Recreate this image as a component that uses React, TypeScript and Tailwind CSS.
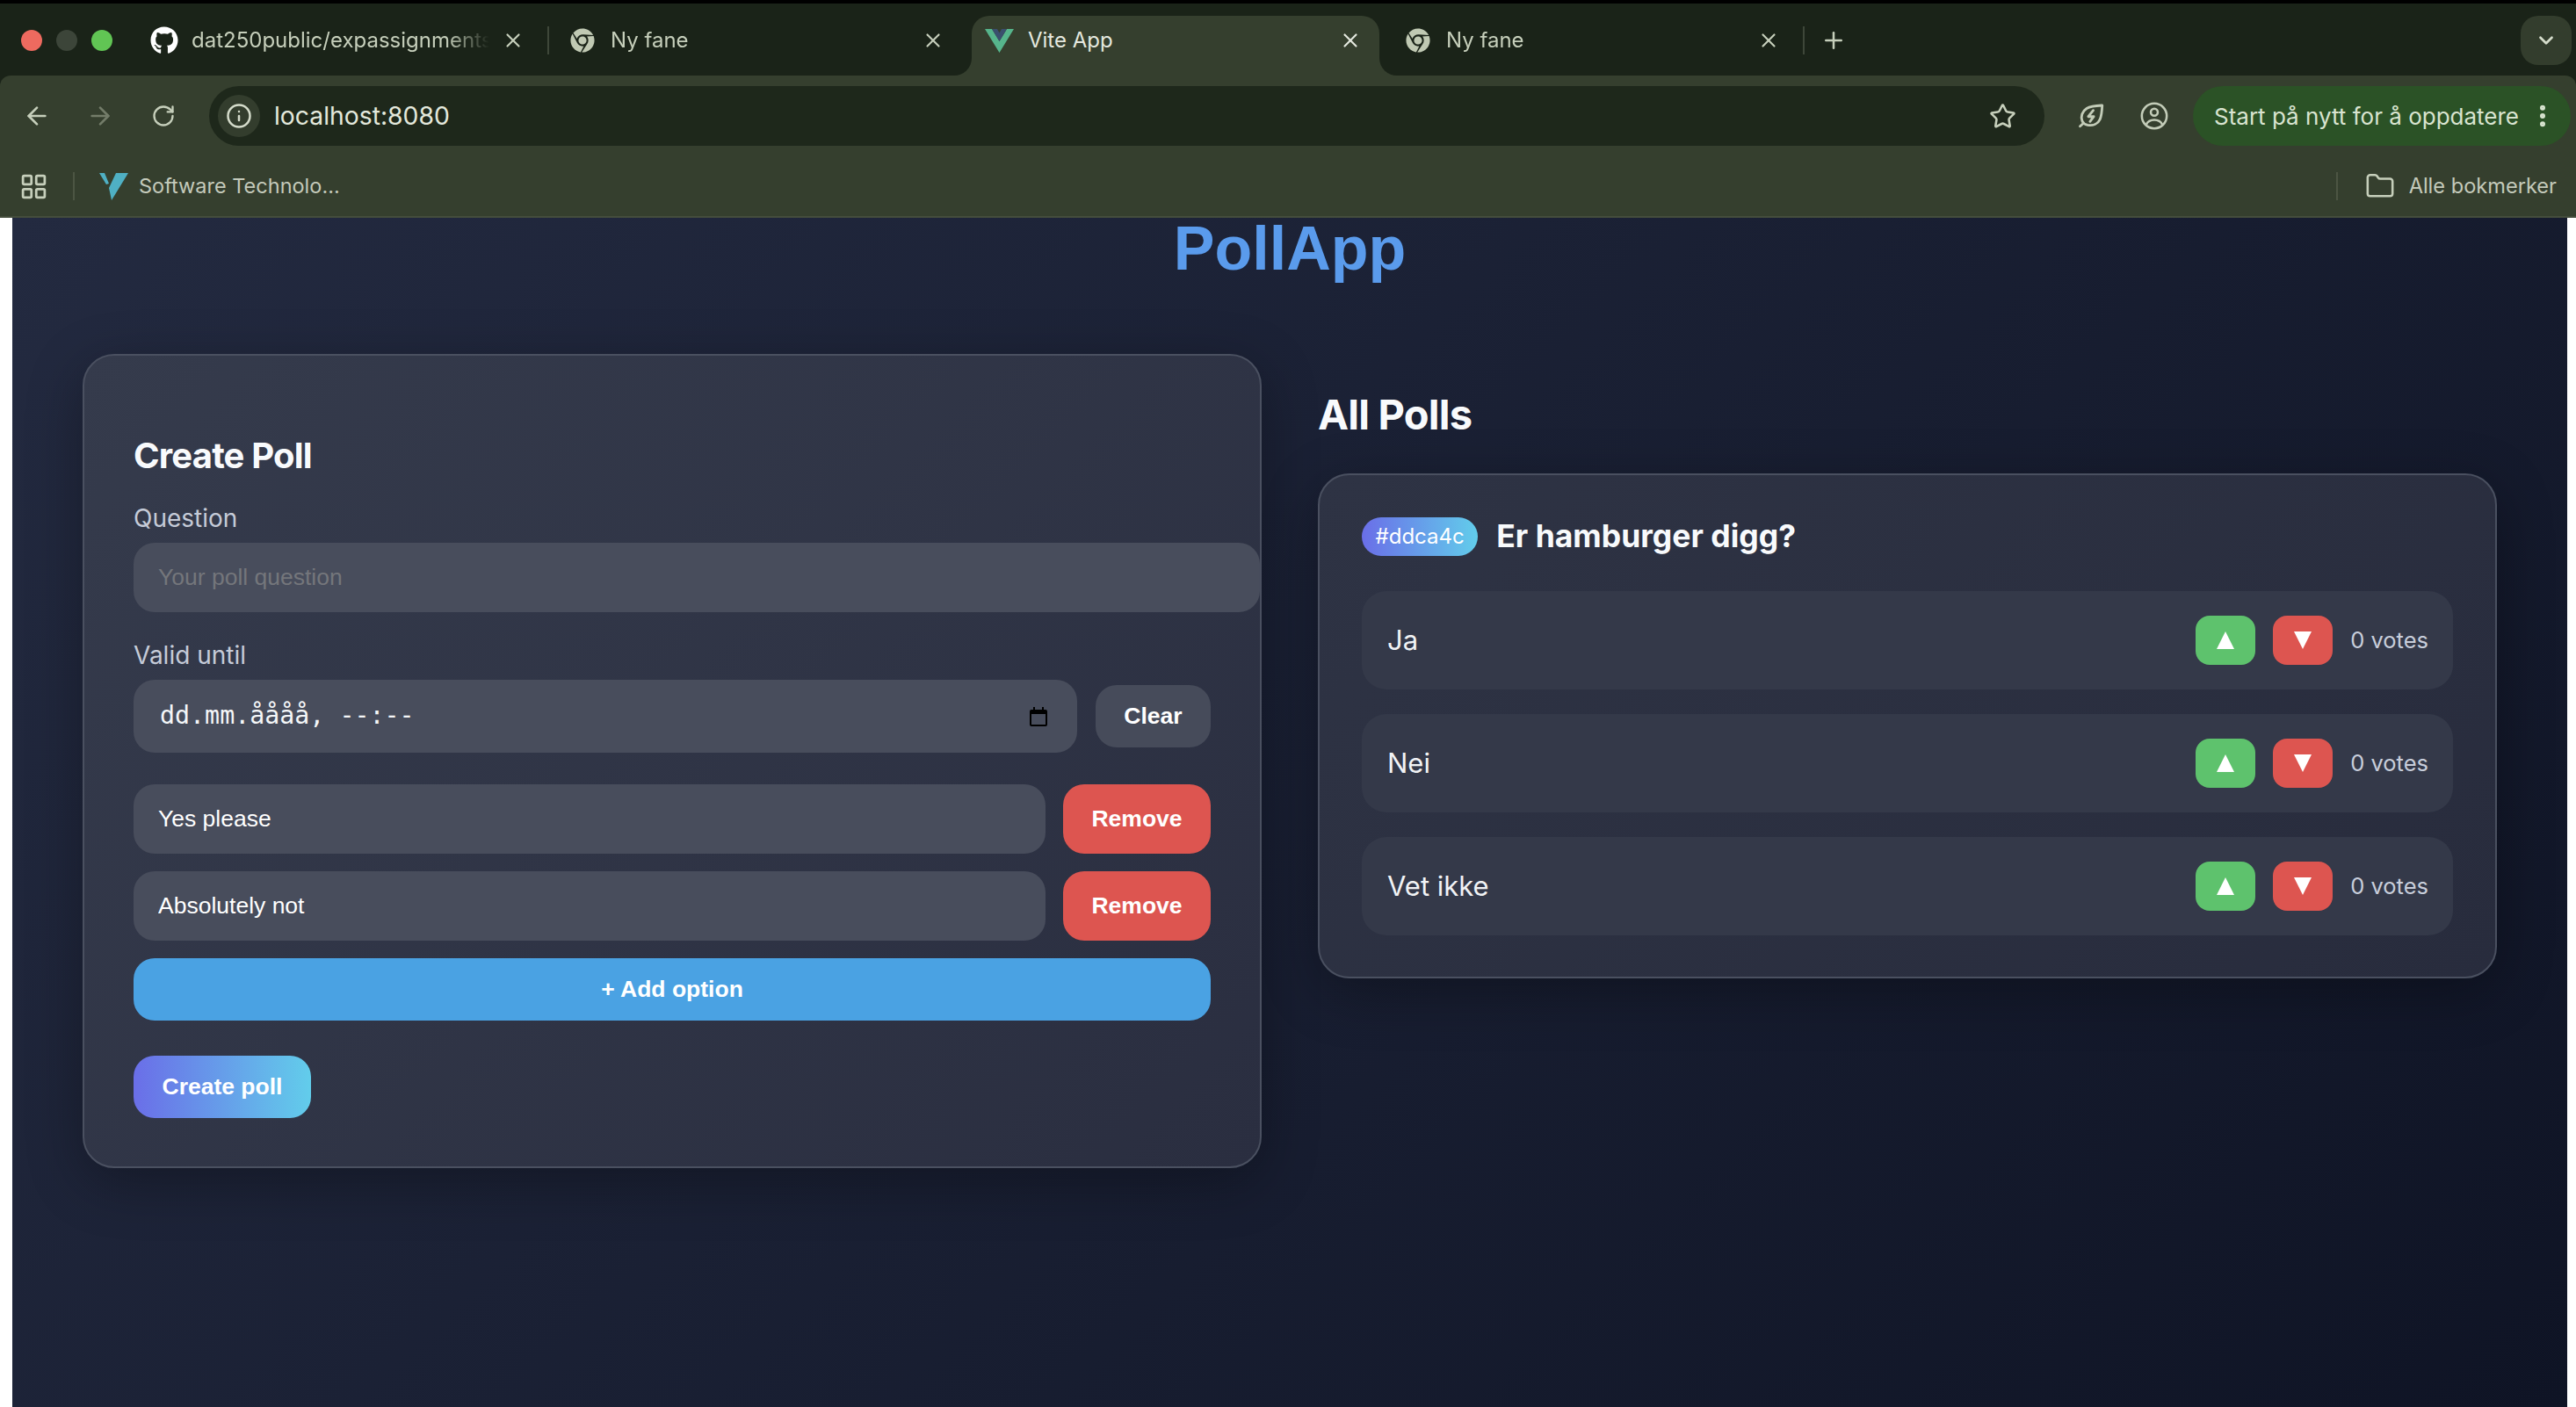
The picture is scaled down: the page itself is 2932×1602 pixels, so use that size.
import { ArrowLeft, ArrowRight, ChevronDown, EllipsisVertical, Folder, Info, LayoutGrid, Plus, RotateCw, Star, X } from 'lucide-react';
import type { ReactNode } from 'react';
import { FaChrome, FaGithub } from 'react-icons/fa';

const pollOptions = ['Ja', 'Nei', 'Vet ikke'];
const draftOptions = ['Yes please', 'Absolutely not'];

function VueIcon() {
  return (
    <svg viewBox="0 0 33 27" className="w-[33px] h-[27px] shrink-0">
      <polygon points="0,0 8,0 16.5,14 25,0 33,0 16.5,27" fill="#56b58c" />
      <polygon points="8,0 14,0 16.5,4.5 19,0 25,0 16.5,14" fill="#3a4f6e" />
    </svg>
  );
}

function BookmarkLogo() {
  return (
    <svg viewBox="0 0 33 32" className="w-[33px] h-[32px] shrink-0">
      <polygon points="0,1 6,1 11,13 8,14" fill="#4fb0c4" />
      <polygon points="19,1 33,1 14,32 11,18" fill="#4fb0c4" />
    </svg>
  );
}

function LeafIcon() {
  return (
    <svg viewBox="0 0 24 24" fill="none" stroke="#c3ccb8" strokeWidth="2" strokeLinecap="round" strokeLinejoin="round" className="w-[34px] h-[34px]">
      <path d="M21 3.5c-5 .2-9 .3-12.5 2.5C4.800 8.300 3.500 12.500 4.900 16c.7 1.700 2.200 2.800 4.300 3.300 4.300.8 8.300-.8 10-4.600 1.300-3 1.600-7 1.800-11.200z" />
      <path d="M5.800 18 3.200 20.300" />
      <path d="M13.800 7.500 9.800 12.500h4.400l-3 4" />
    </svg>
  );
}

function ProfileIcon() {
  return (
    <svg viewBox="0 0 24 24" fill="none" stroke="#c3ccb8" strokeWidth="1.8" strokeLinecap="round" className="w-[34px] h-[34px]">
      <circle cx="12" cy="12" r="10" />
      <circle cx="12" cy="9" r="2.8" />
      <path d="M5.500 19c1.400-3 3.900-3.800 6.500-3.800s5.100.8 6.500 3.800" />
    </svg>
  );
}

function CalendarIcon() {
  return (
    <svg viewBox="0 0 20 22" className="w-[20px] h-[22px] shrink-0">
      <path d="M4 0h2v3h8V0h2v3h2a2 2 0 0 1 2 2v15a2 2 0 0 1-2 2H2a2 2 0 0 1-2-2V5a2 2 0 0 1 2-2h2z M2 8v12h16V8z" fill="#000" fillRule="evenodd" />
    </svg>
  );
}

function Tab({ icon, title, className, active }: { icon: ReactNode; title: string; className: string; active?: boolean }) {
  return (
    <div className={`relative h-[68px] rounded-t-[20px] ${active ? 'bg-[#353f2e]' : ''} ${className}`}>
      {active && (
        <>
          <div className="absolute left-[-20px] bottom-0 w-[20px] h-[20px] bg-[#353f2e]">
            <div className="w-full h-full rounded-br-[20px] bg-[#1a2318]" />
          </div>
          <div className="absolute right-[-20px] bottom-0 w-[20px] h-[20px] bg-[#353f2e]">
            <div className="w-full h-full rounded-bl-[20px] bg-[#1a2318]" />
          </div>
        </>
      )}
      <div className="flex items-center h-[56px]">
        {icon}
        <span className={`flex-1 overflow-hidden whitespace-nowrap text-[24px] ${active ? 'text-[#e4e8df]' : 'text-[#c6cfbb] [mask-image:linear-gradient(90deg,#000_82%,transparent_96%)]'}`}>
          {title}
        </span>
        <X size={26} strokeWidth={2} className={active ? 'text-[#e4e8df]' : 'text-[#c6cfbb]'} />
      </div>
    </div>
  );
}

function BrowserChrome() {
  return (
    <header className="shrink-0 bg-[#1a2318] border-t-4 border-black">
      {/* Tabs */}
      <div className="flex items-start h-[82px]">
        <div className="flex items-center gap-[16px] w-[150px] pl-[24px] mt-[14px] h-[56px]">
          <div className="w-[24px] h-[24px] rounded-full bg-[#ee6a5f]" />
          <div className="w-[24px] h-[24px] rounded-full bg-[#3c4539]" />
          <div className="w-[24px] h-[24px] rounded-full bg-[#61c554]" />
        </div>
        <div className="mt-[14px] flex items-start">
          <Tab
            className="w-[473px] pl-[21px] pr-[26px]"
            title="dat250public/expassignments"
            icon={<FaGithub size={32} className="text-white mr-[15px] shrink-0" />}
          />
          <div className="w-[2px] h-[32px] mt-[12px] bg-[#3e4739]" />
          <Tab
            className="w-[481px] pl-[24px] pr-[31px]"
            title="Ny fane"
            icon={<FaChrome size={28} className="text-[#c0c9b3] mr-[18px] shrink-0" />}
          />
          <Tab
            active
            className="w-[464px] pl-[15px] pr-[20px]"
            title="Vite App"
            icon={<div className="mr-[16px]"><VueIcon /></div>}
          />
          <Tab
            className="w-[482px] pl-[30px] pr-[26px]"
            title="Ny fane"
            icon={<FaChrome size={28} className="text-[#c0c9b3] mr-[18px] shrink-0" />}
          />
          <div className="w-[2px] h-[32px] mt-[12px] bg-[#3e4739]" />
          <div className="h-[56px] ml-[18px] flex items-center">
            <Plus size={30} strokeWidth={2} className="text-[#c6cfbb]" />
          </div>
        </div>
        <div className="ml-auto mr-[5px] mt-[14px] w-[58px] h-[56px] rounded-[20px] bg-[#333d2d] flex items-center justify-center">
          <ChevronDown size={26} strokeWidth={2.5} className="text-[#d5dccb]" />
        </div>
      </div>

      {/* Toolbar */}
      <div className="bg-[#353f2e] rounded-t-[12px] h-[162px] pt-[12px] border-b-2 border-[#444d3c]">
        <div className="flex items-center h-[68px] pl-[6px] pr-[6px]">
          <div className="w-[72px] flex justify-center"><ArrowLeft size={32} strokeWidth={2} className="text-[#c6cfbb]" /></div>
          <div className="w-[72px] flex justify-center"><ArrowRight size={32} strokeWidth={2} className="text-[#737c69]" /></div>
          <div className="w-[72px] flex justify-center"><RotateCw size={28} strokeWidth={2} className="text-[#c6cfbb]" /></div>
          <div className="ml-[16px] flex-1 h-[68px] rounded-full bg-[#1e281b] flex items-center pl-[10px] pr-[32px]">
            <div className="w-[48px] h-[48px] rounded-full bg-[#333d2d] flex items-center justify-center">
              <Info size={30} strokeWidth={2} className="text-[#d5dccb]" />
            </div>
            <span className="ml-[16px] text-[28.300px] text-[#e3e8dc]">localhost:8080</span>
            <Star size={31} strokeWidth={2} className="ml-auto text-[#c6cfbb]" />
          </div>
          <div className="ml-[17px] w-[72px] flex justify-center"><LeafIcon /></div>
          <div className="w-[72px] flex justify-center"><ProfileIcon /></div>
          <div className="ml-[8px] w-[430px] h-[68px] rounded-full bg-[#2b5226] flex items-center pl-[24px] pr-[16px] justify-between">
            <span className="text-[26px] text-[#d9e4d0] whitespace-nowrap">Start på nytt for å oppdatere</span>
            <EllipsisVertical size={32} strokeWidth={2.5} className="text-[#d9e4d0]" />
          </div>
        </div>

        {/* Bookmarks */}
        <div className="flex items-center h-[80px] pt-[12px] pl-[22px] pr-[22px]">
          <LayoutGrid size={33} strokeWidth={2} className="text-[#c6cfbb]" />
          <div className="ml-[28px] w-[2px] h-[32px] bg-[#4c5543]" />
          <div className="ml-[28px]"><BookmarkLogo /></div>
          <span className="ml-[12px] text-[23.500px] text-[#c4cabb]">Software Technolo...</span>
          <div className="ml-auto w-[2px] h-[32px] bg-[#4c5543]" />
          <Folder size={34} strokeWidth={1.800} className="ml-[31px] text-[#c6cfbb]" />
          <span className="ml-[16px] text-[23.600px] text-[#c4cabb]">Alle bokmerker</span>
        </div>
      </div>
    </header>
  );
}

function CreatePollCard() {
  const field = "rounded-[24px] bg-[#484d5c] text-white px-[28px] text-[26.500px] font-['Liberation_Sans',sans-serif] outline-none placeholder:text-[#74767b]";
  const action = "rounded-[24px] text-white font-bold text-[26.500px] font-['Liberation_Sans',sans-serif]";
  return (
    <section className="rounded-[36px] border-2 border-[#4a5060] bg-[linear-gradient(135deg,#353b4c,#2a2e40)] shadow-[0_16px_64px_rgba(0,0,0,0.3)] px-[56px] pt-[58px] pb-[55px]">
      <h2 className="mt-[32px] text-[40px] leading-[48px] font-bold tracking-[-0.8px] text-[#f8fafc]">Create Poll</h2>

      <label className="block mt-[30px] text-[28px] leading-[34px] text-[#c5cbd8]">Question</label>
      <input placeholder="Your poll question" className={`${field} block mt-[11px] h-[79px] w-[1282px]`} />

      <label className="block mt-[32px] text-[28px] leading-[34px] text-[#c5cbd8]">Valid until</label>
      <div className="mt-[11px] flex items-center gap-[21px]">
        <div className="flex-1 h-[83px] rounded-[24px] bg-[#484d5c] flex items-center justify-between pl-[30px] pr-[34px]">
          <span className="font-['DejaVu_Sans_Mono',monospace] text-[28.300px] text-[#f4f6f8]">dd.mm.åååå, --:--</span>
          <CalendarIcon />
        </div>
        <button className={`${action} w-[131px] h-[71px] bg-[#464b5a] text-[#f4f6f8]`}>Clear</button>
      </div>

      <div className="mt-[36px] flex flex-col gap-[20px]">
        {draftOptions.map((option) => (
          <div key={option} className="flex items-center gap-[20px]">
            <input defaultValue={option} className={`${field} flex-1 min-w-0 h-[79px]`} />
            <button className={`${action} w-[168px] h-[79px] bg-[#dd5550]`}>Remove</button>
          </div>
        ))}
      </div>

      <button className={`${action} block mt-[20px] w-full h-[71px] bg-[#4aa2e3]`}>+ Add option</button>
      <button className={`${action} block mt-[40px] w-[202px] h-[71px] bg-[linear-gradient(90deg,#6a6ee8,#62cdeb)]`}>Create poll</button>
    </section>
  );
}

function PollCard() {
  return (
    <section className="mt-[39px] rounded-[36px] border-2 border-[#4a5060] bg-[linear-gradient(135deg,#2e3344,#282c3d)] shadow-[0_16px_64px_rgba(0,0,0,0.3)] px-[48px] pt-[48px] pb-[47px]">
      <div className="flex items-center gap-[21px] h-[44px]">
        <span className="h-[44px] px-[15.500px] rounded-full bg-[linear-gradient(90deg,#6a6ee8,#62cdeb)] flex items-center text-[24px] text-white">#ddca4c</span>
        <h3 className="text-[35.500px] font-bold text-[#f8fafc]">Er hamburger digg?</h3>
      </div>
      <div className="mt-[40px] flex flex-col gap-[28px]">
        {pollOptions.map((option) => (
          <div key={option} className="h-[112px] rounded-[28px] bg-[#343949] flex items-center justify-between pl-[29px] pr-[28px]">
            <span className="text-[31px] text-[#f1f3f5]">{option}</span>
            <div className="flex items-center gap-[20px]">
              <button className="w-[68px] h-[56px] rounded-[16px] bg-[#5ec26d] flex items-center justify-center">
                <svg viewBox="0 0 20 20" className="w-[20px] h-[20px]"><polygon points="10,0 20,20 0,20" fill="#fff" /></svg>
              </button>
              <button className="w-[68px] h-[56px] rounded-[16px] bg-[#dd5550] flex items-center justify-center">
                <svg viewBox="0 0 20 20" className="w-[20px] h-[20px]"><polygon points="0,0 20,0 10,20" fill="#fff" /></svg>
              </button>
              <span className="text-[25.500px] text-[#c8cedb]">0 votes</span>
            </div>
          </div>
        ))}
      </div>
    </section>
  );
}

export default function App() {
  return (
    <div className="h-screen overflow-hidden flex flex-col bg-white font-[Inter,sans-serif]">
      <BrowserChrome />
      <main className="flex-1 ml-[14px] mr-[10px] px-[80px] bg-[linear-gradient(135deg,#232a40,#0f1425)]">
        <h1 className="text-center text-[70px] leading-[70px] font-bold font-['Liberation_Sans',sans-serif] text-[#5a9bec]">PollApp</h1>
        <div className="mt-[85px] grid grid-cols-2 gap-[64px] items-start">
          <CreatePollCard />
          <div className="pt-[41px]">
            <h2 className="text-[47px] leading-[56px] font-bold tracking-[-0.8px] text-[#f8fafc]">All Polls</h2>
            <PollCard />
          </div>
        </div>
      </main>
    </div>
  );
}
